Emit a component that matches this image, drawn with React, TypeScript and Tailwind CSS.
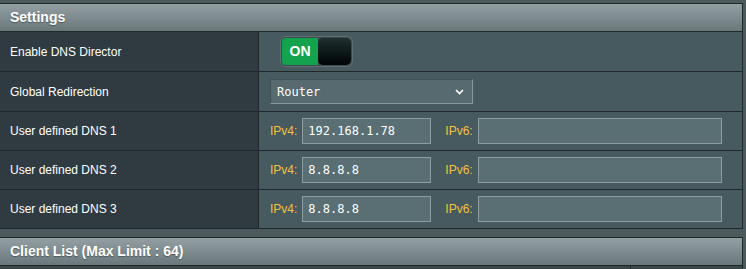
import React from "react";

const labelFont = { fontFamily: '"Liberation Sans", Arial, sans-serif' };
const monoFont = { fontFamily: '"DejaVu Sans Mono", monospace' };

type DnsRowProps = { label: string; ipv4: string; ipv6: string };

const Row = ({ label, children, h = "h-[39px]" }: { label: string; children: React.ReactNode; h?: string }) => (
  <div className={`flex ${h} border-b border-[#1f282b]`}>
    <div className="w-[259px] flex items-center pl-[10px] bg-[#2f3b40] border-r border-[#1f282b] text-[12px] text-white">
      {label}
    </div>
    <div className="flex-1 flex items-center pl-[11px] bg-[#465a5f]">{children}</div>
  </div>
);

const TextBox = ({ value, w }: { value: string; w: string }) => (
  <div
    className={`${w} h-[26px] bg-[#596f73] border border-[#8d9c9f] flex items-center pl-[5px] text-[12px] text-white`}
    style={monoFont}
  >
    {value}
  </div>
);

const DnsRow = ({ label, ipv4, ipv6 }: DnsRowProps) => (
  <Row label={label}>
    <span className="text-[12px] text-[#f3c23c] mr-[5px]">IPv4:</span>
    <TextBox value={ipv4} w="w-[129px]" />
    <span className="text-[12px] text-[#f3c23c] ml-[14px] mr-[5px]">IPv6:</span>
    <TextBox value={ipv6} w="w-[244px]" />
  </Row>
);

const Header = ({ title }: { title: string }) => (
  <div className="h-[29px] border border-l-0 border-[#1f282b] bg-gradient-to-b from-[#939fa3] to-[#6a787c] flex items-center pl-[10px]">
    <span className="text-[14px] font-bold text-white [text-shadow:0_1px_1px_rgba(0,0,0,0.35)]">{title}</span>
  </div>
);

export default function App() {
  const dns: DnsRowProps[] = [
    { label: "User defined DNS 1", ipv4: "192.168.1.78", ipv6: "" },
    { label: "User defined DNS 2", ipv4: "8.8.8.8", ipv6: "" },
    { label: "User defined DNS 3", ipv4: "8.8.8.8", ipv6: "" },
  ];

  return (
    <div className="w-[746px] h-[269px] overflow-hidden bg-[#4c5a5e] pt-[3px]" style={labelFont}>
      <div className="w-[743px]">
        <Header title="Settings" />
        <div className="border-r border-[#1f282b]">
          <Row label="Enable DNS Director" h="h-[40px]">
            <div className="ml-[10px] w-[73px] h-[31px] rounded-[6px] border border-[#5f6f73] bg-[#3a4a4e] p-[1px] flex">
              <div className="w-[36px] h-full rounded-l-[4px] bg-[#13a24e] flex items-center justify-center text-white text-[14px] font-bold">
                ON
              </div>
              <div className="flex-1 h-full rounded-[5px] bg-gradient-to-b from-[#20302f] to-[#020506]" />
            </div>
          </Row>
          <Row label="Global Redirection" h="h-[40px]">
            <div
              className="w-[203px] h-[25px] bg-[#566a6f] border border-t-[#3f5055] border-l-[#3f5055] border-r-[#8a999c] border-b-[#8a999c] flex items-center pl-[6px] pr-[8px] text-[12px] text-white"
              style={monoFont}
            >
              <span className="flex-1">Router</span>
              <svg width="9" height="6" viewBox="0 0 9 6" fill="none">
                <path d="M1 1l3.5 3.5L8 1" stroke="white" strokeWidth="1.6" />
              </svg>
            </div>
          </Row>
          {dns.map((d) => (
            <DnsRow key={d.label} {...d} />
          ))}
        </div>
        <div className="h-[8px]" />
        <Header title="Client List (Max Limit : 64)" />
        <div className="flex h-[20px] border-r border-[#1f282b]">
          <div className="w-[631px] bg-[#3b474b] border-r border-[#1f282b]" />
          <div className="flex-1 bg-[#3b474b]" />
        </div>
      </div>
    </div>
  );
}
